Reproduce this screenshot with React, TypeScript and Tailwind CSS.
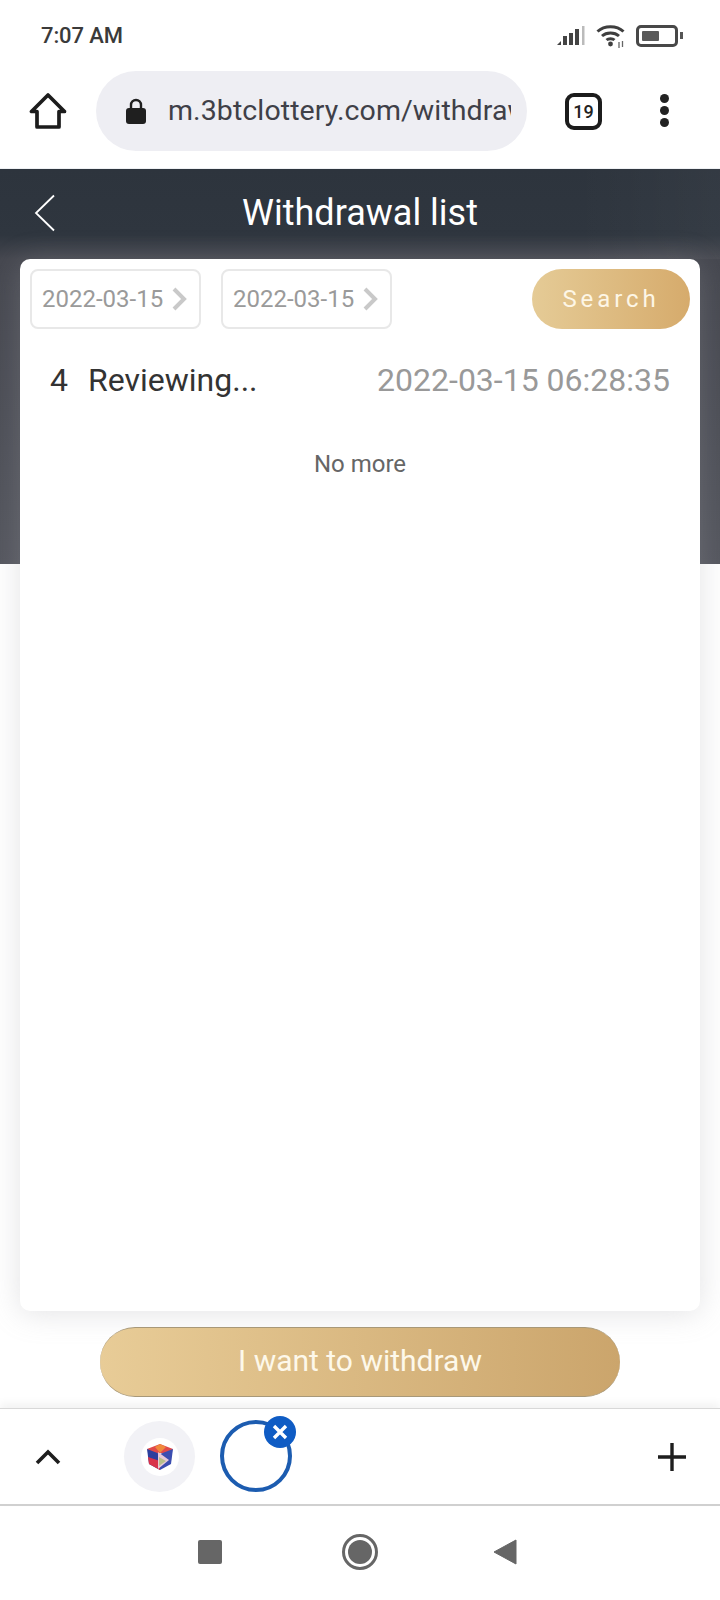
import React from "react";

const roboto = "font-['Roboto','Liberation_Sans',sans-serif]";

function StatusIcons() {
  return (
    <div className="flex items-center gap-[10px] mr-[1px]">
      <svg width="30" height="22" viewBox="0 0 30 22">
        <path d="M1 20l4-4v4z" fill="#444" />
        <rect x="7" y="11" width="4" height="9" fill="#444" />
        <rect x="13" y="8" width="4" height="12" fill="#444" />
        <rect x="19" y="4" width="4" height="16" fill="#444" />
        <rect x="26" y="1" width="2.500" height="19" fill="#bbb" />
      </svg>
      <svg width="30" height="26" viewBox="0 0 30 26" fill="none" stroke="#3f3f3f" strokeWidth="3">
        <path d="M1.500 8.500C8.500 2 20.500 2 27.500 8.500" />
        <path d="M6 13c4.500-4 12.500-4 17 0" />
        <path d="M10.500 17c2-1.800 6-1.800 8 0" />
        <circle cx="14.500" cy="21" r="2.400" fill="#3f3f3f" stroke="none" />
        <path d="M23 19v6M26.500 18v6" strokeWidth="1.300" stroke="#666" />
      </svg>
      <div className="flex items-center gap-[2px]">
        <div className="w-[42px] h-[22px] rounded-[5px] border-[3px] border-[#484848] p-[3px]">
          <div className="w-[17px] h-full bg-[#5a5a5a] rounded-[1px]" />
        </div>
        <div className="w-[3px] h-[7px] bg-[#555]" />
      </div>
    </div>
  );
}

function DateBox() {
  return (
    <div className="w-[171px] h-[60px] rounded-[8px] border-2 border-[#e8e8e8] flex items-center pl-[10px] gap-[9px]">
      <span className="text-[24px] text-[#9a9a9a]">2022-03-15</span>
      <svg width="16" height="24" viewBox="0 0 16 24" fill="none" stroke="#c9c9c9" strokeWidth="4">
        <path d="M2 2l10 10L2 22" />
      </svg>
    </div>
  );
}

function Cube() {
  return (
    <svg width="28" height="28" viewBox="0 0 28 28">
      <path d="M14 1l13 5-3 5-10-1-10 1-3-5z" fill="#e04a4a" />
      <path d="M14 1l6 3-6 6-5-6z" fill="#f08a3c" />
      <path d="M1 6l13 5v16L3 21z" fill="#2b3f9e" />
      <path d="M27 6L14 11v16l11-6z" fill="#3b4db0" />
      <path d="M2 14l12 4v9L3 21z" fill="#d9324a" />
      <path d="M12 9l11 8-11 9z" fill="#e8c8d8" />
      <path d="M13 14l7 4-7 5z" fill="#b9c08a" />
    </svg>
  );
}

export default function App() {
  return (
    <div className={`w-[720px] h-[1600px] flex flex-col bg-white overflow-hidden ${roboto}`}>
      {/* Status bar */}
      <div className="h-[70px] flex items-center justify-between pl-[41px] pr-[36px] pt-[1px]">
        <span className="text-[22px] font-medium text-[#3a3a3a] tracking-[-0.1px]">7:07 AM</span>
        <StatusIcons />
      </div>

      {/* Browser bar */}
      <div className="h-[99px] flex items-start border-b border-[#eef0f3]">
        <div className="w-[96px] h-[80px] mt-[1px] flex items-center justify-center">
          <svg width="38" height="38" viewBox="0 0 38 38" fill="none" stroke="#1c1c1c" strokeWidth="3.700" strokeLinejoin="round">
            <path d="M19 3L2.500 19.500H8V35H30V19.500H35.500Z" />
          </svg>
        </div>
        <div className="w-[431px] h-[80px] mt-[1px] rounded-full bg-[#eeeef3] flex items-center pl-[29px] pr-[16px]">
          <svg width="22" height="28" viewBox="0 0 22 28" className="shrink-0">
            <path d="M6 12V8a5 5 0 0 1 10 0v4" fill="none" stroke="#1f1f1f" strokeWidth="2.400" />
            <rect x="1" y="11" width="20" height="16" rx="3" fill="#1f1f1f" />
          </svg>
          <div className="ml-[21px] overflow-hidden whitespace-nowrap text-[28.500px] text-[#3f4048] tracking-[0.1px]">
            m.3btclottery.com/withdraw
          </div>
        </div>
        <div className="w-[37px] h-[37px] mt-[23px] ml-[38px] rounded-[9px] border-[4px] border-[#1c1c1c] flex items-center justify-center text-[18px] font-medium text-[#222]">
          19
        </div>
        <div className="ml-[58px] mt-[24px] flex flex-col gap-[3px]">
          <div className="w-[9px] h-[9px] rounded-full bg-[#222]" />
          <div className="w-[9px] h-[9px] rounded-full bg-[#222]" />
          <div className="w-[9px] h-[9px] rounded-full bg-[#222]" />
        </div>
      </div>

      {/* Page */}
      <div className="flex-1 flex flex-col bg-[linear-gradient(to_bottom,#2d343d_0px,#2f363f_66px,#45474f_90px,#55575f_395px,#ffffff_395px,#ffffff_100%)]">
        <div className="h-[90px] flex items-center relative bg-[linear-gradient(to_right,transparent_80%,rgba(255,255,255,0.03))]">
          <svg width="24" height="38" viewBox="0 0 24 38" fill="none" stroke="#fff" strokeWidth="1.800" className="ml-[33px] mb-[2px]">
            <path d="M21 1.500L3 19l18 17.500" />
          </svg>
          <div className="absolute inset-x-0 text-center text-[36px] text-white mb-[2px]">Withdrawal list</div>
        </div>

        <div className="mx-[20px] h-[1052px] bg-white rounded-[10px] shadow-[0_2px_30px_rgba(160,160,165,0.3)] flex flex-col">
          <div className="flex items-center pt-[10px] pl-[10px] pr-[10px]">
            <DateBox />
            <div className="w-[20px]" />
            <DateBox />
            <div className="ml-auto w-[158px] h-[60px] rounded-full bg-[linear-gradient(to_right,#e5cb96,#d6ab6c)] flex items-center justify-center text-[24px] text-[#fdf6e6] tracking-[3.900px]">
              Search
            </div>
          </div>
          <div className="flex items-center justify-between pl-[30px] pr-[30px] mt-[23px] h-[56px] text-[32px]">
            <div className="flex items-center gap-[20px] text-[#333]">
              <span>4</span>
              <span>Reviewing...</span>
            </div>
            <span className="text-[#999]">2022-03-15 06:28:35</span>
          </div>
          <div className="mt-[38px] text-center text-[24px] text-[#666]">No more</div>
        </div>

        <div className="mx-auto mt-[16px] w-[520px] h-[70px] pb-[3px] rounded-full border-y border-[#a89878] bg-[linear-gradient(to_right,#e8cc97,#cba56c)] flex items-center justify-center text-[30px] text-[#fdf8ea]">
          I want to withdraw
        </div>
        <div className="h-[9px]" />
      </div>

      {/* Tab strip */}
      <div className="h-[98px] bg-white border-t border-[#d8d8d8] border-b-2 border-b-[#d0d0d0] shadow-[0_-5px_8px_rgba(0,0,0,0.05)] flex items-center relative">
        <svg width="26" height="16" viewBox="0 0 26 16" fill="none" stroke="#1e1e1e" strokeWidth="3.600" className="ml-[35px]">
          <path d="M2 14L13 3l11 11" />
        </svg>
        <div className="ml-[63px] w-[71px] h-[71px] rounded-full bg-[#f2f2f6] flex items-center justify-center">
          <div className="w-[38px] h-[38px] rounded-full bg-white flex items-center justify-center">
            <Cube />
          </div>
        </div>
        <div className="relative ml-[25px] mb-[2px] w-[72px] h-[72px] rounded-full border-[4px] border-[#1c5cb0]">
          <div className="absolute -top-[8px] -right-[8px] w-[32px] h-[32px] rounded-full bg-[#0f5cc4] flex items-center justify-center">
            <svg width="18" height="18" viewBox="0 0 18 18" stroke="#fff" strokeWidth="3.400">
              <path d="M3 3l12 12M15 3L3 15" />
            </svg>
          </div>
        </div>
        <svg width="30" height="30" viewBox="0 0 30 30" stroke="#1e1e1e" strokeWidth="3.400" className="ml-auto mr-[33px]">
          <path d="M15 1v28M1 15h28" />
        </svg>
      </div>

      {/* Nav bar */}
      <div className="h-[94px] bg-white flex items-center pb-[2px]">
        <div className="ml-[198px] w-[24px] h-[24px] rounded-[2px] bg-[#666]" />
        <div className="ml-[120px] w-[36px] h-[36px] rounded-full border-[3px] border-[#666] p-[3px]">
          <div className="w-full h-full rounded-full bg-[#666]" />
        </div>
        <svg width="24" height="26" viewBox="0 0 24 26" className="ml-[115px]">
          <path d="M1 13L23 1v24z" fill="#666" stroke="#666" strokeLinejoin="round" />
        </svg>
      </div>
    </div>
  );
}
